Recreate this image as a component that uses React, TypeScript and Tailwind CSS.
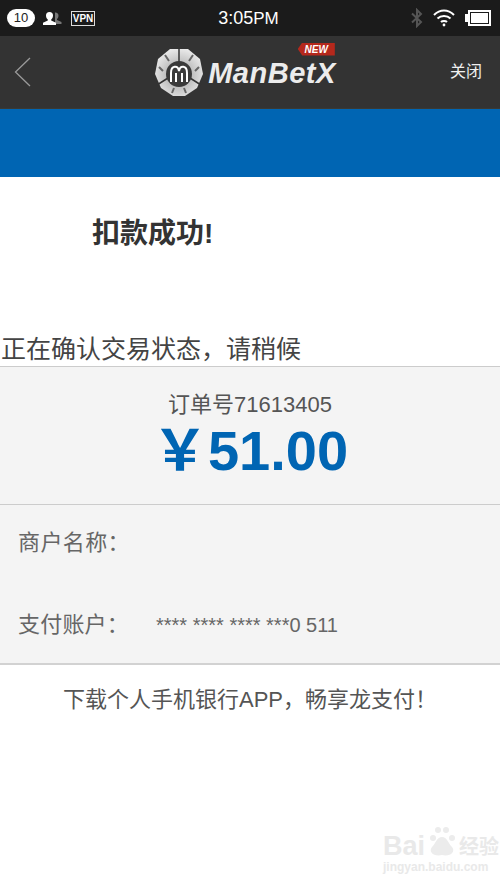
import React from "react";

const font = { fontFamily: '"Liberation Sans", "Noto Sans CJK SC", sans-serif' };

function Ball() {
  return (
    <svg width="50" height="50" viewBox="0 0 50 50">
      <defs>
        <radialGradient id="g" cx="50%" cy="55%" r="55%">
          <stop offset="0%" stopColor="#8a8a8a" />
          <stop offset="45%" stopColor="#bdbdbd" />
          <stop offset="100%" stopColor="#e8e8e8" />
        </radialGradient>
      </defs>
      <path d="M16 2 L34 2 L46 12 L49 27 L43 41 L31 49 L19 49 L7 41 L1 27 L4 12 Z" fill="url(#g)" />
      <path d="M25 1 V15 M3 38 L14 31 M47 38 L36 31" stroke="#333" strokeWidth="1.5" />
      <path d="M11 8 L15 14 M39 8 L35 14 M5 20 L9 24 M45 20 L41 24 M18 46 L20 41 M32 46 L30 41" stroke="#666" strokeWidth="2" />
      <circle cx="25" cy="27" r="13" fill="#3a3a3a" />
      <path d="M17 35 V26 C17 18 24 18 25 24 C26 18 33 18 33 26 V35 M22 35 V26 M28 35 V26" fill="none" stroke="#fff" strokeWidth="2" />
    </svg>
  );
}

function Wifi() {
  return (
    <svg width="22" height="18" viewBox="0 0 22 18" fill="none" stroke="#fff" strokeWidth="2">
      <path d="M1 6 C7 0 15 0 21 6" />
      <path d="M4.5 9.5 C8 6 14 6 17.5 9.5" />
      <path d="M8 13 C9.5 11.5 12.5 11.5 14 13" />
      <circle cx="11" cy="16" r="1.4" fill="#fff" stroke="none" />
    </svg>
  );
}

export default function App() {
  return (
    <div className="relative w-[500px] h-[878px] overflow-hidden bg-white" style={font}>
      {/* status bar */}
      <div className="h-[36px] bg-[#1b1b1b] flex items-center pl-[7px] pr-[9px] text-white">
        <div className="flex-1 flex items-center">
          <span className="w-[28px] h-[18px] rounded-full bg-white text-[#222] text-[13px] leading-[18px] text-center">10</span>
          <svg className="ml-[7px]" width="21" height="14" viewBox="0 0 21 14">
            <path d="M13 1.5 a3 3 0 0 1 3.5 3 c0 1.800-.8 3-1.500 3.500 v1 l4.500 2 v2 H13 Z" fill="#777" />
            <path d="M7.500 1 a3.500 3.500 0 0 1 3.500 3.500 c0 2-.8 3.300-1.800 4 v1 l4.800 2.300 V14 H1 v-2.200 l4.800-2.300 v-1 c-1-.7-1.800-2-1.800-4 A3.500 3.500 0 0 1 7.500 1 Z" fill="#fff" />
          </svg>
          <span className="ml-[8px] w-[24px] h-[15px] border border-[#ddd] text-[10px] leading-[13px] text-center font-bold">VPN</span>
        </div>
        <span className="text-[18px] leading-none -ml-[1px]">3:05<span className="text-[17px]">PM</span></span>
        <div className="flex-1 flex items-center justify-end gap-[10px]">
          <svg width="12" height="20" viewBox="0 0 12 20" fill="none" stroke="#555" strokeWidth="2">
            <path d="M1 5.500 L10 14 L6 18 V2 L10 6 L1 14.500" />
          </svg>
          <Wifi />
          <div className="flex items-center">
            <span className="w-[3px] h-[8px] bg-white" />
            <span className="w-[23px] h-[16px] border-2 border-white p-[1px]">
              <span className="block w-full h-full bg-white" />
            </span>
          </div>
        </div>
      </div>

      {/* nav */}
      <div className="relative h-[73px] bg-[#333333] border-b border-b-[#3a3a34] flex items-center justify-between pl-[14px] pr-[18px]">
        <svg width="17" height="30" viewBox="0 0 17 30" fill="none" stroke="#9a9a9a" strokeWidth="1.300">
          <path d="M16 1 L1.500 15 L16 29" />
        </svg>
        <div className="flex items-center -mt-[1px] ml-[9px]">
          <Ball />
          <div className="relative ml-[4px] mt-[3px]">
            <span className="block italic font-bold text-[29px] leading-none tracking-[0.5px] text-[#ececec]" style={{ fontFamily: '"Liberation Sans", sans-serif' }}>
              ManBetX
            </span>
            <span className="absolute -top-[16px] right-[1px] h-[13px] w-[37px] bg-[#b5281c] text-white italic font-bold text-[10px] leading-[13px] text-center" style={{ clipPath: "polygon(12% 0, 100% 0, 100% 100%, 12% 100%, 0 50%)" }}>
              NEW
            </span>
          </div>
        </div>
        <span className="text-[16px] text-[#f0f0f0]">关闭</span>
      </div>

      {/* blue band */}
      <div className="h-[68px] bg-[#0065b3]" />

      {/* success */}
      <div className="h-[189px] relative flex flex-col justify-between">
        <h1 className="pl-[92px] pt-[37px] text-[28px] leading-[40px] font-bold text-[#333]">扣款成功!</h1>
        <p className="pl-[1px] text-[25px] leading-[34px] text-[#444]">正在确认交易状态，请稍候</p>
      </div>

      {/* amount */}
      <div className="h-[139px] bg-[#f4f4f4] border-y border-y-[#cccccc] text-center">
        <p className="pt-[24px] text-[22px] leading-[28px] text-[#555]">订单号71613405</p>
        <p className="mt-[1px] text-[56px] leading-[62px] font-bold text-[#0065b3]">￥51.00</p>
      </div>

      {/* details */}
      <div className="h-[160px] bg-[#f4f4f4] border-b-2 border-b-[#d2d2d2] pl-[18px] text-[22px] text-[#666]">
        <div className="pt-[23px] leading-[30px] tracking-[0.4px]">商户名称：</div>
        <div className="mt-[52px] flex items-center leading-[30px]">
          <span className="w-[138px] tracking-[0.2px]">支付账户：</span>
          <span className="text-[20px]">**** **** **** ***0 511</span>
        </div>
      </div>

      {/* footer text */}
      <p className="pt-[20px] text-center text-[22px] leading-[30px] text-[#555]">下载个人手机银行APP，畅享龙支付！</p>

      {/* watermark */}
      <div className="absolute left-[383px] top-[833px] text-[#e9e9e9]">
        <div className="flex items-center">
          <span className="text-[27px] font-bold leading-none">Bai</span>
          <svg width="34" height="34" viewBox="0 0 34 34" fill="#ececec" className="-mt-[12px]">
            <circle cx="8" cy="14" r="3" />
            <circle cx="13" cy="6" r="3" />
            <circle cx="21" cy="6" r="3" />
            <circle cx="27" cy="14" r="3" />
            <path d="M17 13 C12 13 11 19 7 23 C3 28 9 33 17 31 C25 33 31 28 27 23 C23 19 22 13 17 13 Z" />
          </svg>
          <span className="text-[20px] font-bold leading-none">经验</span>
        </div>
        <div className="text-[12px] leading-[14px] font-bold">jingyan.baidu.com</div>
      </div>
    </div>
  );
}
